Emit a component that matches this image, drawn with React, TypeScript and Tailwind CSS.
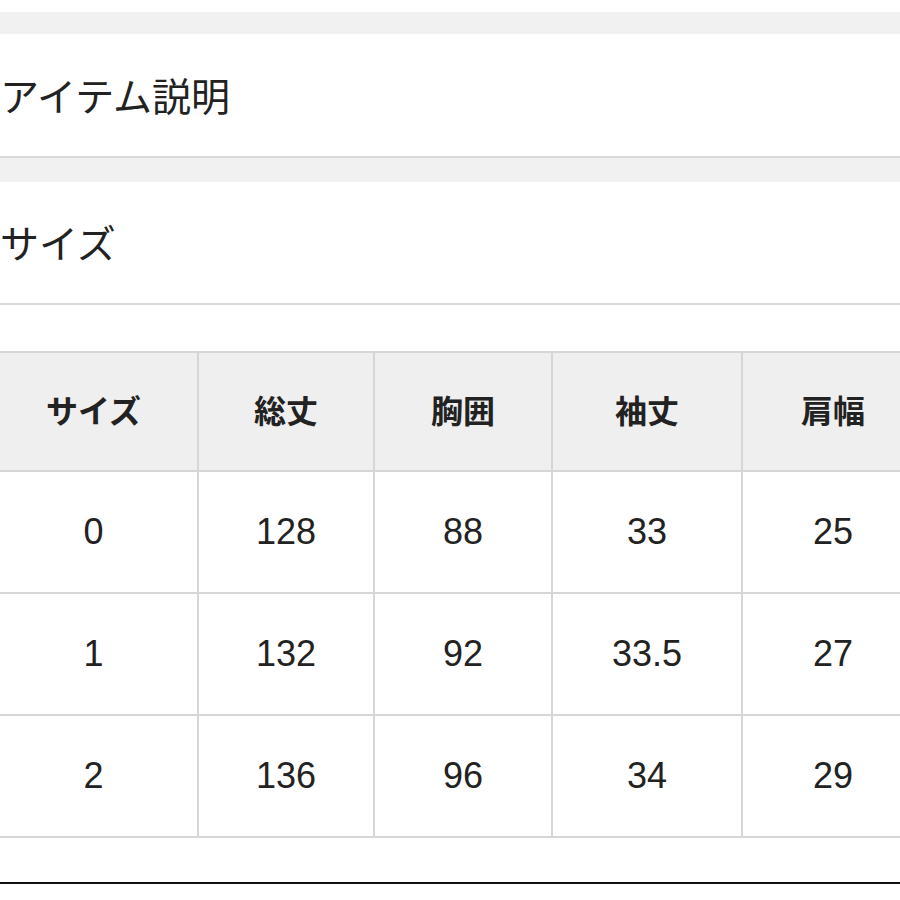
const headers = ["サイズ", "総丈", "胸囲", "袖丈", "肩幅"];

const rows = [
  ["0", "128", "88", "33", "25"],
  ["1", "132", "92", "33.5", "27"],
  ["2", "136", "96", "34", "29"],
];

export default function App() {
  return (
    <div
      className="h-[900px] w-[900px] overflow-hidden bg-white text-[#222]"
      style={{ fontFamily: '"Liberation Sans", "Noto Sans CJK JP", sans-serif' }}
    >
      <div className="h-[12px]" />
      <div className="h-[22px] bg-[#f1f1f1]" />
      <section className="flex h-[124px] items-center border-b-2 border-[#d9d9d9] pt-[4px] text-[39px] leading-none">
        アイテム説明
      </section>
      <div className="h-[24px] bg-[#f1f1f1]" />
      <section className="flex h-[123px] items-center border-b-2 border-[#d9d9d9] pt-[4px] text-[39px] leading-none">
        サイズ
      </section>
      <div className="h-[46px]" />

      {/* size table */}
      <div className="ml-[-12px] grid w-[936px] grid-cols-[207px_174px_176px_188px_180px] gap-[2px] bg-[#d6d6d6] px-[2px] py-[2px]">
        {headers.map((h) => (
          <div
            key={h}
            className="flex h-[117px] items-center justify-center bg-[#efefef] text-[32px] font-bold leading-none"
          >
            {h}
          </div>
        ))}
        {rows.map((row, i) =>
          row.map((cell, j) => (
            <div
              key={`${i}-${j}`}
              className="flex h-[120px] items-center justify-center bg-white text-[36px] leading-none"
            >
              {cell}
            </div>
          )),
        )}
      </div>

      <div className="h-[44px]" />
      <div className="h-[2px] bg-[#111]" />
    </div>
  );
}
